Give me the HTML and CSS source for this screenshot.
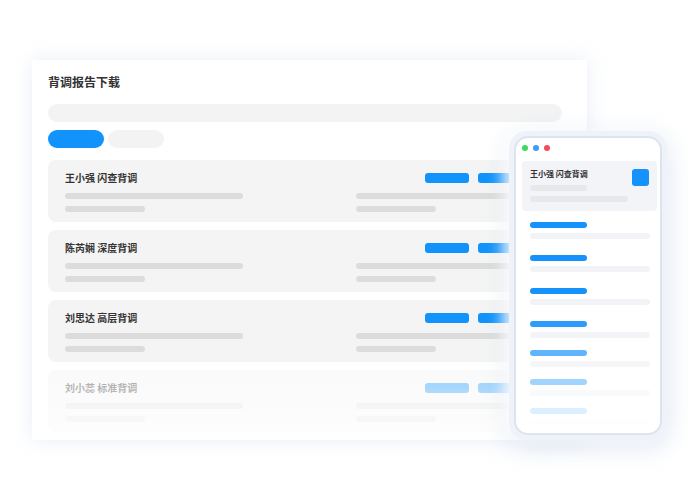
FILE: index.html
```html
<!DOCTYPE html>
<html lang="zh-CN">
<head>
  <meta charset="UTF-8">
  <title>背调报告下载</title>
  <link rel="stylesheet" href="styles.css">
</head>
<body>
  <div class="stage">
    <div class="panel">
      <div class="panel-title">背调报告下载</div>
      <div class="search"></div>
      <div class="tabs">
        <span class="tab active"></span>
        <span class="tab"></span>
      </div>
      <div class="report-list">
        <div class="report">
          <div class="report-name">王小强 闪查背调</div>
          <div class="report-actions"><span class="btn"></span><span class="btn"></span></div>
          <div class="col"><span class="bar long"></span><span class="bar short"></span></div>
          <div class="col"><span class="bar long"></span><span class="bar short"></span></div>
        </div>
        <div class="report">
          <div class="report-name">陈芮娴 深度背调</div>
          <div class="report-actions"><span class="btn"></span><span class="btn"></span></div>
          <div class="col"><span class="bar long"></span><span class="bar short"></span></div>
          <div class="col"><span class="bar long"></span><span class="bar short"></span></div>
        </div>
        <div class="report">
          <div class="report-name">刘思达 高层背调</div>
          <div class="report-actions"><span class="btn"></span><span class="btn"></span></div>
          <div class="col"><span class="bar long"></span><span class="bar short"></span></div>
          <div class="col"><span class="bar long"></span><span class="bar short"></span></div>
        </div>
        <div class="report faded">
          <div class="report-name">刘小蕊 标准背调</div>
          <div class="report-actions"><span class="btn"></span><span class="btn"></span></div>
          <div class="col"><span class="bar long"></span><span class="bar short"></span></div>
          <div class="col"><span class="bar long"></span><span class="bar short"></span></div>
        </div>
      </div>
    </div>

    <!-- mobile preview floating over the panel -->
    <div class="phone">
      <div class="phone-screen">
        <div class="dots">
          <span class="dot green"></span><span class="dot blue"></span><span class="dot red"></span>
        </div>
        <div class="m-card">
          <div class="m-card-body">
            <div class="m-card-name">王小强 闪查背调</div>
            <span class="m-bar short"></span>
            <span class="m-bar long"></span>
          </div>
          <span class="m-icon"></span>
        </div>
        <div class="m-list">
          <div class="m-item"><span class="m-link"></span><span class="m-line"></span></div>
          <div class="m-item"><span class="m-link"></span><span class="m-line"></span></div>
          <div class="m-item"><span class="m-link"></span><span class="m-line"></span></div>
          <div class="m-item o90"><span class="m-link"></span><span class="m-line"></span></div>
          <div class="m-item o70"><span class="m-link"></span><span class="m-line"></span></div>
          <div class="m-item o40"><span class="m-link"></span><span class="m-line"></span></div>
          <div class="m-item o15"><span class="m-link"></span><span class="m-line"></span></div>
        </div>
      </div>
    </div>
  </div>
</body>
</html>
```

FILE: styles.css
```css
body {
  margin: 0;
  background: #fff;
  font-family: "Noto Sans CJK SC", "Noto Sans", sans-serif;
  color: #333;
}
.stage {
  position: relative;
  width: 700px;
  height: 500px;
  overflow: hidden;
  padding-top: 60px;
  box-sizing: border-box;
}
.panel {
  position: relative;
  margin-left: 32px;
  width: 555px;
  height: 380px;
  box-sizing: border-box;
  padding: 14px 25px 0 16px;
  background: #fff;
  box-shadow: 0 0 18px rgba(190,205,230,0.35);
  overflow: hidden;
}
/* fade out bottom of the list */
.panel:after {
  content: "";
  position: absolute;
  left: 0; right: 0; bottom: 0;
  height: 60px;
  background: linear-gradient(180deg, rgba(255,255,255,0) 0%, rgba(255,255,255,0.75) 100%);
}
.panel-title {
  font-size: 12px;
  line-height: 16px;
  font-weight: 700;
  color: #333;
}
.search {
  margin-top: 14px;
  height: 18px;
  border-radius: 9px;
  background: #f3f3f3;
}
.tabs {
  display: flex;
  gap: 4px;
  margin-top: 8px;
}
.tab {
  width: 56px;
  height: 18px;
  border-radius: 9px;
  background: #f3f3f3;
}
.tab.active {
  background: #1193fb;
}
.report-list {
  display: flex;
  flex-direction: column;
  gap: 8px;
  margin-top: 12px;
}
.report {
  display: grid;
  grid-template-columns: 291px 1fr;
  align-content: start;
  row-gap: 8px;
  height: 62px;
  box-sizing: border-box;
  padding: 11px 0 0 17px;
  border-radius: 8px;
  background: #f4f4f4;
}
.report-name {
  font-size: 10px;
  line-height: 14px;
  font-weight: 700;
  color: #333;
}
.report-actions {
  display: flex;
  align-items: center;
  gap: 9px;
  padding-left: 69px;
}
.btn {
  width: 44px;
  height: 10px;
  border-radius: 3px;
  background: #1193fb;
}
.col {
  display: flex;
  flex-direction: column;
  gap: 7px;
}
.bar {
  height: 6px;
  border-radius: 3px;
  background: #dcdcdc;
}
.bar.long { width: 178px; }
.bar.short { width: 80px; }
.report.faded {
  opacity: 0.4;
}

.phone {
  position: absolute;
  left: 509px;
  top: 131px;
  width: 158px;
  height: 309px;
  box-sizing: border-box;
  padding: 5px;
  border-radius: 18px;
  background: #eff3f9;
  box-shadow: -6px 0 14px rgba(255,255,255,0.85), 0 6px 26px rgba(165,185,220,0.4);
}
.phone-screen {
  height: 100%;
  box-sizing: border-box;
  padding: 7px 3px 0 6px;
  border: 2px solid #dee4ee;
  border-radius: 14px;
  background: #fff;
  overflow: hidden;
}
.dots {
  display: flex;
  gap: 5px;
  height: 6px;
}
.dot {
  width: 6px;
  height: 6px;
  border-radius: 50%;
}
.dot.green { background: #3ed860; }
.dot.blue { background: #3c9cf6; }
.dot.red { background: #f54d57; }
.m-card {
  display: flex;
  justify-content: space-between;
  width: 135px;
  box-sizing: border-box;
  margin-top: 10px;
  padding: 8px 8px 9px 8px;
  border-radius: 4px;
  background: #f3f4f8;
}
.m-card-body {
  display: flex;
  flex-direction: column;
}
.m-card-name {
  font-size: 8px;
  line-height: 10px;
  font-weight: 700;
  color: #333;
}
.m-bar {
  height: 6px;
  border-radius: 3px;
  background: #e7e8ec;
}
.m-bar.short { width: 57px; margin-top: 6px; }
.m-bar.long { width: 98px; margin-top: 5px; }
.m-icon {
  width: 17px;
  height: 17px;
  border-radius: 3px;
  background: #1592fb;
}
.m-list {
  display: flex;
  flex-direction: column;
  margin-top: 11px;
  padding-left: 8px;
}
.m-item {
  display: flex;
  flex-direction: column;
  gap: 5px;
  margin-bottom: 16px;
}
.m-item:nth-child(n+4) { margin-bottom: 12px; }
.m-link {
  width: 57px;
  height: 6px;
  border-radius: 3px;
  background: #1592fb;
}
.m-line {
  width: 120px;
  height: 6px;
  border-radius: 3px;
  background: #f2f3f7;
}
.o90 { opacity: 0.9; }
.o70 { opacity: 0.68; }
.o40 { opacity: 0.4; }
.o15 { opacity: 0.15; }
```
